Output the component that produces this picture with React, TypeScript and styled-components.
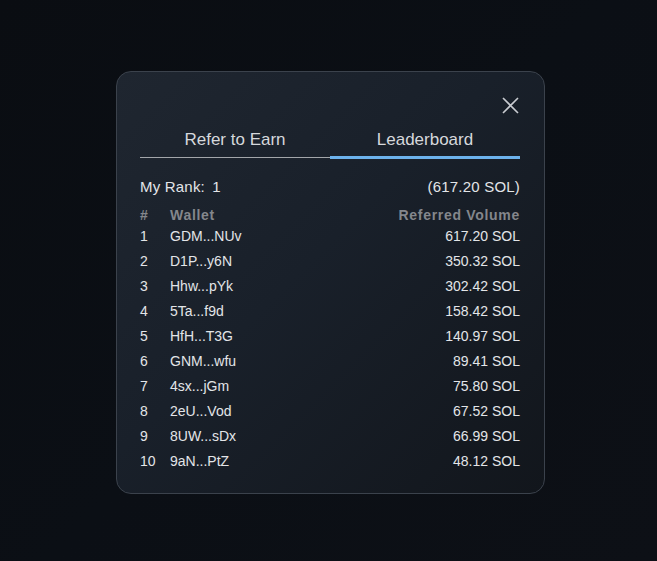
import React, { useState } from "react";
import styled, { createGlobalStyle } from "styled-components";

const GlobalStyle = createGlobalStyle`
  html, body {
    margin: 0;
    padding: 0;
    background: #0a0d12;
  }
  body {
    font-family: "Liberation Sans", Arial, sans-serif;
  }
`;

const rows = [
  { wallet: "GDM...NUv", volume: "617.20" },
  { wallet: "D1P...y6N", volume: "350.32" },
  { wallet: "Hhw...pYk", volume: "302.42" },
  { wallet: "5Ta...f9d", volume: "158.42" },
  { wallet: "HfH...T3G", volume: "140.97" },
  { wallet: "GNM...wfu", volume: "89.41" },
  { wallet: "4sx...jGm", volume: "75.80" },
  { wallet: "2eU...Vod", volume: "67.52" },
  { wallet: "8UW...sDx", volume: "66.99" },
  { wallet: "9aN...PtZ", volume: "48.12" },
];

function App() {
  const [tab, setTab] = useState("leaderboard");

  return (
    <>
      <GlobalStyle />
      <Page>
        <Modal>
          <CloseRow>
            <CloseButton aria-label="Close">
              <svg width="17" height="17" viewBox="0 0 17 17">
                <path
                  d="M1 1 L16 16 M16 1 L1 16"
                  stroke="#c9ccd1"
                  strokeWidth="1.6"
                  fill="none"
                />
              </svg>
            </CloseButton>
          </CloseRow>

          <Tabs>
            <Tab active={tab === "refer"} onClick={() => setTab("refer")}>
              Refer to Earn
            </Tab>
            <Tab
              active={tab === "leaderboard"}
              onClick={() => setTab("leaderboard")}
            >
              Leaderboard
            </Tab>
          </Tabs>

          <RankRow>
            <span>
              My Rank: <RankValue>1</RankValue>
            </span>
            <span>(617.20 SOL)</span>
          </RankRow>

          <Table>
            <HeadRow>
              <span>#</span>
              <span>Wallet</span>
              <VolumeCell>Referred Volume</VolumeCell>
            </HeadRow>
            {rows.map((row, index) => (
              <Row key={index}>
                <span>{index + 1}</span>
                <span>{row.wallet}</span>
                <VolumeCell>{row.volume} SOL</VolumeCell>
              </Row>
            ))}
          </Table>
        </Modal>
      </Page>
    </>
  );
}

const Page = styled.div`
  width: 657px;
  height: 561px;
  display: flex;
  align-items: flex-start;
  padding: 71px 0 0 116px;
  box-sizing: border-box;
  background: linear-gradient(135deg, #0a0d12 0%, #0b0f15 50%, #0d1016 100%);
`;

const Modal = styled.div`
  width: 429px;
  height: 423px;
  box-sizing: border-box;
  padding: 24px 24px 0 23px;
  border: 1px solid #3b424c;
  border-radius: 15px;
  background: linear-gradient(135deg, #1f2630 0%, #19202a 45%, #12161c 100%);
  color: #e3e5e8;
`;

const CloseRow = styled.div`
  display: flex;
  justify-content: flex-end;
  height: 20px;
`;

const CloseButton = styled.button`
  background: none;
  border: none;
  padding: 0;
  margin: 1px 1px 0 0;
  width: 17px;
  height: 17px;
  cursor: pointer;
  display: flex;
`;

const Tabs = styled.div`
  display: grid;
  grid-template-columns: 1fr 1fr;
  margin-top: 14px;
  align-items: end;
`;

const Tab = styled.div<{ active: boolean }>`
  text-align: center;
  font-size: 17px;
  color: #d6d8dc;
  cursor: pointer;
  padding-bottom: ${(p) => (p.active ? "7px" : "8px")};
  border-bottom: ${(p) =>
    p.active ? "3px solid #6cb2ec" : "1px solid #a3a6aa"};
  margin-bottom: ${(p) => (p.active ? "0" : "1px")};
  line-height: 19px;
`;

const RankRow = styled.div`
  display: flex;
  justify-content: space-between;
  margin-top: 19px;
  font-size: 15px;
  line-height: 18px;
  letter-spacing: 0.2px;
  color: #e3e5e8;
`;

const RankValue = styled.span`
  margin-left: 3px;
`;

const Table = styled.div`
  margin-top: 11px;
  display: flex;
  flex-direction: column;
`;

const Row = styled.div`
  display: grid;
  grid-template-columns: 30px 1fr auto;
  height: 25px;
  align-items: start;
  font-size: 14px;
  line-height: 16px;
  color: #e3e5e8;
`;

const HeadRow = styled(Row)`
  height: 21px;
  color: #84878c;
  font-weight: bold;
  letter-spacing: 0.7px;
`;

const VolumeCell = styled.span`
  text-align: right;
`;

export default App;
